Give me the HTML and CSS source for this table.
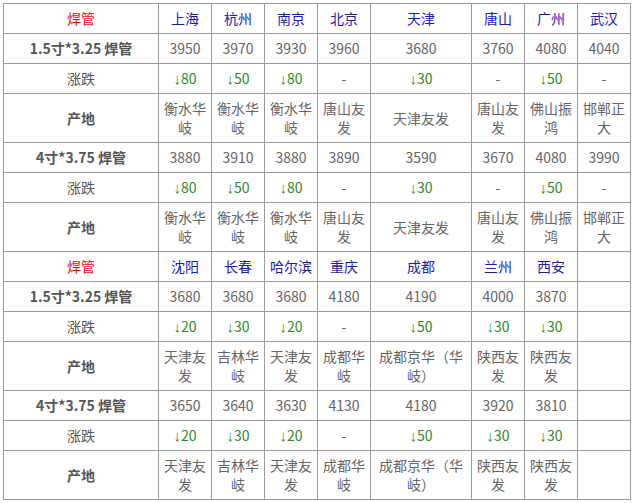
FILE: index.html
```html
<!DOCTYPE html>
<html lang="zh">
<head>
<meta charset="utf-8">
<link rel="stylesheet" href="styles.css">
</head>
<body>
<div class="wrap">
<table class="price">
<colgroup>
<col class="c-label"><col class="c-n"><col class="c-n"><col class="c-n"><col class="c-n"><col class="c-w"><col class="c-n"><col class="c-n"><col class="c-n">
</colgroup>
<tbody>
<tr><td class="title">焊管</td><td class="city">上海</td><td class="city">杭州</td><td class="city">南京</td><td class="city">北京</td><td class="city">天津</td><td class="city">唐山</td><td class="city">广州</td><td class="city">武汉</td></tr>
<tr><td class="label">1.5寸*3.25 焊管</td><td>3950</td><td>3970</td><td>3930</td><td>3960</td><td>3680</td><td>3760</td><td>4080</td><td>4040</td></tr>
<tr><td class="label reg">涨跌</td><td class="down"><span class="arr">↓</span>80</td><td class="down"><span class="arr">↓</span>50</td><td class="down"><span class="arr">↓</span>80</td><td>-</td><td class="down"><span class="arr">↓</span>30</td><td>-</td><td class="down"><span class="arr">↓</span>50</td><td>-</td></tr>
<tr><td class="label">产地</td><td>衡水华岐</td><td>衡水华岐</td><td>衡水华岐</td><td>唐山友发</td><td>天津友发</td><td>唐山友发</td><td>佛山振鸿</td><td>邯郸正大</td></tr>
<tr><td class="label">4寸*3.75 焊管</td><td>3880</td><td>3910</td><td>3880</td><td>3890</td><td>3590</td><td>3670</td><td>4080</td><td>3990</td></tr>
<tr><td class="label reg">涨跌</td><td class="down"><span class="arr">↓</span>80</td><td class="down"><span class="arr">↓</span>50</td><td class="down"><span class="arr">↓</span>80</td><td>-</td><td class="down"><span class="arr">↓</span>30</td><td>-</td><td class="down"><span class="arr">↓</span>50</td><td>-</td></tr>
<tr><td class="label">产地</td><td>衡水华岐</td><td>衡水华岐</td><td>衡水华岐</td><td>唐山友发</td><td>天津友发</td><td>唐山友发</td><td>佛山振鸿</td><td>邯郸正大</td></tr>
<tr><td class="title">焊管</td><td class="city">沈阳</td><td class="city">长春</td><td class="city">哈尔滨</td><td class="city">重庆</td><td class="city">成都</td><td class="city">兰州</td><td class="city">西安</td><td></td></tr>
<tr><td class="label">1.5寸*3.25 焊管</td><td>3680</td><td>3680</td><td>3680</td><td>4180</td><td>4190</td><td>4000</td><td>3870</td><td></td></tr>
<tr><td class="label reg">涨跌</td><td class="down"><span class="arr">↓</span>20</td><td class="down"><span class="arr">↓</span>30</td><td class="down"><span class="arr">↓</span>20</td><td>-</td><td class="down"><span class="arr">↓</span>50</td><td class="down"><span class="arr">↓</span>30</td><td class="down"><span class="arr">↓</span>30</td><td></td></tr>
<tr><td class="label">产地</td><td>天津友发</td><td>吉林华岐</td><td>天津友发</td><td>成都华岐</td><td>成都京华（华岐）</td><td>陕西友发</td><td>陕西友发</td><td></td></tr>
<tr><td class="label">4寸*3.75 焊管</td><td>3650</td><td>3640</td><td>3630</td><td>4130</td><td>4180</td><td>3920</td><td>3810</td><td></td></tr>
<tr><td class="label reg">涨跌</td><td class="down"><span class="arr">↓</span>20</td><td class="down"><span class="arr">↓</span>30</td><td class="down"><span class="arr">↓</span>20</td><td>-</td><td class="down"><span class="arr">↓</span>50</td><td class="down"><span class="arr">↓</span>30</td><td class="down"><span class="arr">↓</span>30</td><td></td></tr>
<tr><td class="label">产地</td><td>天津友发</td><td>吉林华岐</td><td>天津友发</td><td>成都华岐</td><td>成都京华（华岐）</td><td>陕西友发</td><td>陕西友发</td><td></td></tr>
</tbody>
</table>
</div>
</body>
</html>
```

FILE: styles.css
```css
html, body {
  margin: 0;
  padding: 0;
  background: #ffffff;
}
.wrap {
  padding: 3px 0 0 3px;
}
.price {
  border-collapse: collapse;
  table-layout: fixed;
  width: 626px;
  border: 1px solid #333333;
  font-family: "Noto Sans CJK SC", "Microsoft YaHei", sans-serif;
  font-size: 14px;
  color: #666666;
}
.c-label { width: 155px; }
.c-n { width: 53px; }
.c-w { width: 101px; }
.price td {
  border: 1px solid #9a9a9a;
  padding: 5px 2px;
  line-height: 19px;
  text-align: center;
  vertical-align: middle;
  word-break: break-all;
}
.price td.title {
  color: #e01010;
}
.price td.city {
  color: #1c1ca8;
}
.price td.label {
  color: #555555;
  font-weight: bold;
}
.price td.label.reg {
  font-weight: normal;
}
.price td.down {
  color: #2f8a2a;
}
.arr {
  font-family: "Liberation Sans", "DejaVu Sans", sans-serif;
  font-size: 15px;
  line-height: 1;
}
```
